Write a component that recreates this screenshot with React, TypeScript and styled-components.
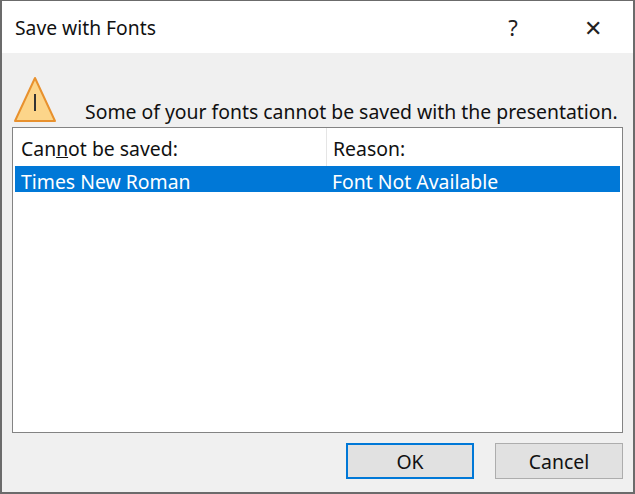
import styled, { createGlobalStyle } from 'styled-components'

const Global = createGlobalStyle`
  html, body { margin: 0; padding: 0; background: #fff; }
  body { font-family: "Noto Sans", "Open Sans", sans-serif; color: #111; }
`

const Dialog = styled.div`
  width: 635px;
  height: 494px;
  box-sizing: border-box;
  border: 2px solid #6b6b6b;
  border-top-width: 1px;
  display: flex;
  flex-direction: column;
  background: #f0f0f0;
`

const TitleBar = styled.div`
  height: 52px;
  background: #fff;
  display: flex;
  align-items: center;
  padding-left: 13px;
  font-size: 19.3px;
`

const Title = styled.div`
  flex: 1;
`

const TitleButton = styled.div`
  width: 80px;
  text-align: center;
  font-size: 22px;
  color: #222;
`

const Message = styled.div`
  display: flex;
  align-items: flex-end;
  gap: 30px;
  padding: 0 0 0 11px;
  height: 70px;
  box-sizing: border-box;
  font-size: 19.4px;
  white-space: nowrap;
`

const MessageText = styled.span`
  margin-bottom: -2px;
  position: relative;
  left: -2px;
`

const ListBox = styled.div`
  margin: 4px 10px 0 10px;
  height: 306px;
  background: #fff;
  border: 1px solid #838383;
  padding: 0 2px;
  box-sizing: border-box;
`

const Row = styled.div<{ $selected?: boolean; $header?: boolean }>`
  display: grid;
  grid-template-columns: 311px 1fr;
  height: ${p => (p.$header ? '38px' : '26px')};
  align-items: center;
  font-size: 19.4px;
  background: ${p => (p.$selected ? '#0078d7' : 'transparent')};
  color: ${p => (p.$selected ? '#fff' : '#111')};
`

const Cell = styled.div<{ $divider?: boolean }>`
  height: 100%;
  display: flex;
  align-items: center;
  padding-left: 6px;
  border-left: ${p => (p.$divider ? '1px solid #e5e5e5' : 'none')};
  padding-top: 2px;
  box-sizing: border-box;
`

const Footer = styled.div`
  display: flex;
  justify-content: flex-end;
  gap: 21px;
  padding: 10px 10px 0 0;
`

const Button = styled.button<{ $default?: boolean }>`
  width: 128px;
  height: 36px;
  font-family: inherit;
  font-size: 19.4px;
  color: #111;
  background: #e1e1e1;
  border: ${p => (p.$default ? '2px solid #0078d7' : '1px solid #adadad')};
`

const Warning = () => (
  <svg width="44" height="48" viewBox="0 0 44 48">
    <path d="M22 3 L42 46 L2 46 Z" fill="#fcd58a" stroke="#e8912e" strokeWidth="2" strokeLinejoin="round" />
    <rect x="21" y="19" width="2" height="17" fill="#333" />
  </svg>
)

export default function App() {
  return (
    <>
      <Global />
      <Dialog>
        <TitleBar>
          <Title>Save with Fonts</Title>
          <TitleButton>?</TitleButton>
          <TitleButton>✕</TitleButton>
        </TitleBar>
        <Message>
          <Warning />
          <MessageText>Some of your fonts cannot be saved with the presentation.</MessageText>
        </Message>
        <ListBox>
          <Row $header>
            <Cell>Can<u>n</u>ot be saved:</Cell>
            <Cell $divider>Reason:</Cell>
          </Row>
          <Row $selected>
            <Cell>Times New Roman</Cell>
            <Cell>Font Not Available</Cell>
          </Row>
        </ListBox>
        <Footer>
          <Button $default>OK</Button>
          <Button>Cancel</Button>
        </Footer>
      </Dialog>
    </>
  )
}
